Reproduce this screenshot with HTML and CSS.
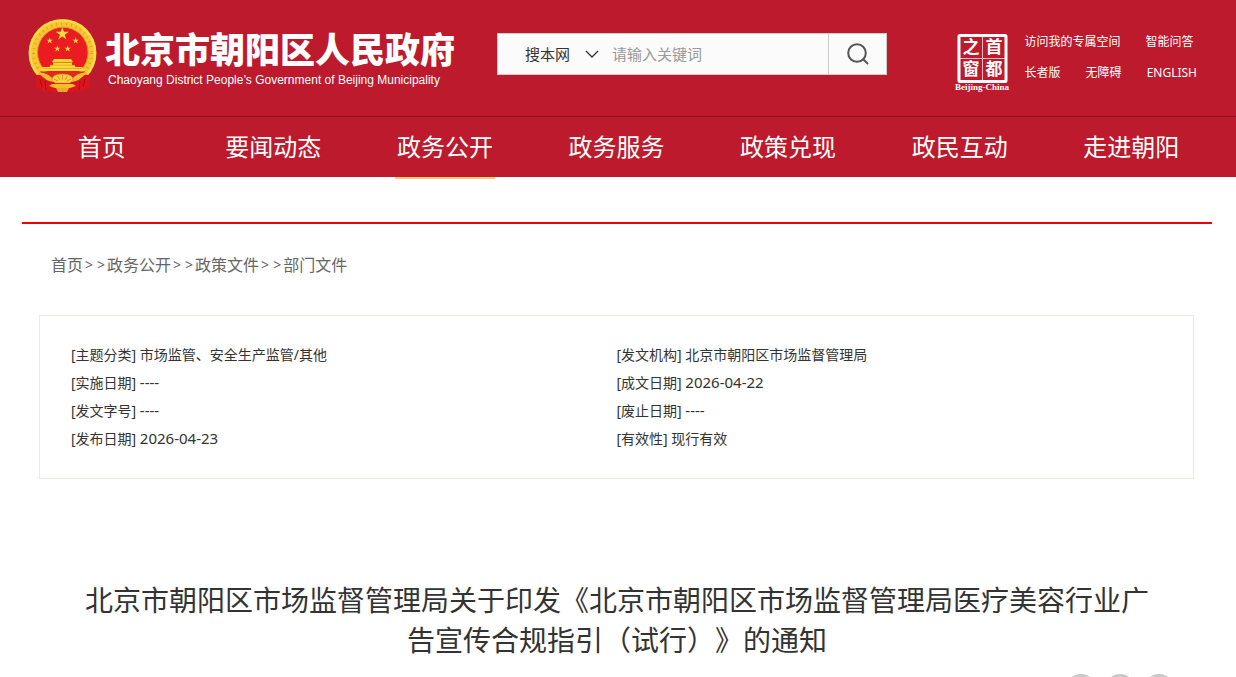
FILE: index.html
```
<!DOCTYPE html>
<html lang="zh-CN">
<head>
  <meta charset="UTF-8" />
  <meta name="viewport" content="width=device-width, initial-scale=1" />
  <title>北京市朝阳区人民政府</title>
  <link rel="stylesheet" href="styles.css">
</head>
<body>
  <header class="header">
    <div class="top">
      <a class="logo" href="#">
        <svg class="emblem" viewBox="0 0 70 76" aria-hidden="true">
          <defs>
            <path id="star" d="M0-10 2.3-3.1H9.5L3.6 1.2 5.9 8.1 0 3.8-5.9 8.1-3.6 1.2-9.5-3.1H-2.3Z" />
          </defs>
          <circle cx="34.5" cy="35" r="34" fill="#f6c733" />
          <circle cx="34.5" cy="35" r="29" fill="none" stroke="#e0a520" stroke-width="3" stroke-dasharray="1 4" />
          <circle cx="34.5" cy="35" r="32.5" fill="none" stroke="#fbdc4d" stroke-width="2" />
          <circle cx="34.8" cy="34.5" r="25.3" fill="#ea1c22" stroke="#d99a1c" stroke-width="1" />
          <g fill="#fbd938">
            <use href="#star" transform="translate(34.3 16) scale(.69)" />
            <use href="#star" transform="translate(21.7 22.7) scale(.34)" />
            <use href="#star" transform="translate(47.7 22.7) scale(.34)" />
            <use href="#star" transform="translate(29.3 30.7) scale(.34)" />
            <use href="#star" transform="translate(39.7 30.7) scale(.34)" />
            <path d="M26 41h17l2 3H24zM25 44.500h19V47H25zM22.500 47h24l1.500 3H21zM15 49h39l3 4H12z" />
          </g>
          <path d="M24 44.300h21M22 47.200h25M15 50.500h39" stroke="#c98a1a" stroke-width=".5" />
          <path d="M9 57q-2 5-.5 13l5 .5 1.500 3 6-1 4 1.500h20l4-1.500 6 1 1.500-3 5-.5q1.500-8-.5-13l-8-1-19 6-17-6z" fill="#dc141d" />
          <path d="M12 61l2 8M17 63l1 9M57 61l-2 8M52 63l-1 9" stroke="#a01019" stroke-width="1" />
          <path d="M12 53.500h45l-3 3q-5 5-11 8H26q-7-3-11-8z" fill="#e3261f" />
          <path d="M10 55q7-1 13 4l5 5q-8 0-12-4zM59 55q-7-1-13 4l-5 5q8 0 12-4z" fill="#f3bd2c" />
          <path d="M24 62q0-6 10.500-6T45 62l-3 3H27z" fill="#f8d044" stroke="#d39a20" stroke-width=".6" />
          <path d="M34.500 56.500v5M29.500 58l2.500 4M39.500 58l-2.500 4M26 61l4 2M43 61l-4 2" stroke="#c98a1a" stroke-width=".8" />
          <path d="M24 66h21l3 2-6 2H27l-6-2z" fill="#f3bd2c" />
          <path d="M28 70h13l-2 4h-9z" fill="#e9a92a" />
        </svg>
        <span class="logo-text">
          <strong>北京市朝阳区人民政府</strong>
          <span class="logo-en">Chaoyang District People’s Government of Beijing Municipality</span>
        </span>
      </a>

      <form class="search">
        <select class="scope" aria-label="搜索范围">
          <option>搜本网</option>
        </select>
        <svg class="chevron" viewBox="0 0 14 8" aria-hidden="true"><path d="M1 1l6 6 6-6" /></svg>
        <input type="text" class="query" placeholder="请输入关键词" aria-label="请输入关键词" autocomplete="off" />
        <button type="submit" class="search-btn" aria-label="搜索">
          <svg viewBox="0 0 24 24"><circle cx="11" cy="11" r="8.800" /><path d="M17.500 17.500l4.500 4.500" /></svg>
        </button>
      </form>

      <div class="side">
        <a class="capital" href="#" aria-label="首都之窗">
          <svg viewBox="0 0 56 60">
            <rect x="4" y="3.500" width="47" height="46" rx="1" fill="none" stroke="#fff" stroke-width="3" />
            <path d="M27.500 5v43M5 26.500h45" stroke="#fff" stroke-width="1" opacity=".7" />
            <g class="seal">
              <text x="16" y="21">之</text>
              <text x="39" y="21">首</text>
              <text x="16" y="43">窗</text>
              <text x="39" y="43">都</text>
            </g>
            <text class="seal-en" x="27" y="58">Beijing-China</text>
          </svg>
        </a>
        <div class="links">
          <div><a href="#">访问我的专属空间</a><a href="#">智能问答</a></div>
          <div><a href="#">长者版</a><a href="#">无障碍</a><a href="#">ENGLISH</a></div>
        </div>
      </div>
    </div>

    <nav class="nav">
      <a href="#">首页</a>
      <a href="#">要闻动态</a>
      <a href="#" class="on">政务公开</a>
      <a href="#">政务服务</a>
      <a href="#">政策兑现</a>
      <a href="#">政民互动</a>
      <a href="#">走进朝阳</a>
    </nav>
  </header>

  <main class="main">
    <div class="crumbs">
      <a href="#">首页</a><span class="sep"><i>&gt;</i><i>&gt;</i></span><a href="#">政务公开</a><span class="sep"><i>&gt;</i><i>&gt;</i></span><a href="#">政策文件</a><span class="sep"><i>&gt;</i><i>&gt;</i></span><a href="#">部门文件</a>
    </div>

    <div class="info">
      <ul>
        <li>[主题分类] 市场监管、安全生产监管/其他</li>
        <li>[实施日期] <span class="num">----</span></li>
        <li>[发文字号] <span class="num">----</span></li>
        <li>[发布日期] <span class="num">2026-04-23</span></li>
      </ul>
      <ul>
        <li>[发文机构] 北京市朝阳区市场监督管理局</li>
        <li>[成文日期] <span class="num">2026-04-22</span></li>
        <li>[废止日期] <span class="num">----</span></li>
        <li>[有效性] 现行有效</li>
      </ul>
    </div>

    <h1>北京市朝阳区市场监督管理局关于印发《北京市朝阳区市场监督管理局医疗美容行业广告宣传合规指引（试行）》的通知</h1>

    <div class="share">
      <a href="#" aria-label="微信"></a>
      <a href="#" aria-label="微博"></a>
      <a href="#" aria-label="打印"></a>
    </div>
  </main>
</body>
</html>
```

FILE: styles.css
```
* {
  box-sizing: border-box;
}
body {
  margin: 0;
  font-family: "Noto Sans", "Noto Sans CJK SC", sans-serif;
  font-size: 14px;
  color: #333;
  background: #fff;
}
a {
  color: inherit;
  text-decoration: none;
}
ul {
  list-style: none;
  margin: 0;
  padding: 0;
}

.header {
  background: #bd1a2d;
  color: #fff;
}
.top {
  display: flex;
  align-items: flex-start;
  height: 117px;
  padding: 18px 39px 0 28px;
  border-bottom: 1px solid #8f0f1e;
}

/* logo */
.logo {
  display: flex;
  gap: 7px;
  width: 469px;
}
.emblem {
  width: 70px;
  height: 76px;
}
.logo-text {
  display: flex;
  flex-direction: column;
  padding-top: 10px;
  white-space: nowrap;
}
.logo-text strong {
  font-family: "Noto Sans CJK SC", sans-serif;
  font-size: 35px;
  font-weight: 900;
  line-height: 40px;
}
.logo-en {
  font-family: "Liberation Sans", Arial, sans-serif;
  font-size: 12px;
  line-height: 24px;
  padding-left: 3px;
}

/* search */
.search {
  position: relative;
  display: flex;
  width: 390px;
  height: 42px;
  margin-top: 15px;
  background: #fbfbfb;
  border: 1px solid #ccc;
}
.scope,
.query {
  border: 0;
  outline: 0;
  padding: 0;
  background: none;
  font: inherit;
  font-size: 15px;
  color: #333;
}
.scope {
  appearance: none;
  width: 114px;
  padding-left: 27px;
}
.query {
  flex: 1;
  min-width: 0;
}
.query::placeholder {
  color: #999;
}
.chevron {
  position: absolute;
  left: 87px;
  top: 16px;
  width: 14px;
  height: 8px;
  fill: none;
  stroke: #333;
  stroke-width: 1.3;
  pointer-events: none;
}
.search-btn {
  width: 58px;
  padding: 0;
  border: 0;
  border-left: 1px solid #ccc;
  background: none;
  cursor: pointer;
}
.search-btn svg {
  display: block;
  width: 24px;
  height: 24px;
  margin: 0 auto;
  fill: none;
  stroke: #555;
  stroke-width: 2;
}

.side {
  display: flex;
  gap: 14px;
  margin-left: auto;
  padding-top: 14px;
}
.capital svg {
  display: block;
  width: 56px;
  height: 60px;
}
.seal {
  font-family: "Noto Sans CJK SC", sans-serif;
  font-size: 17px;
  font-weight: 700;
  fill: #fff;
  text-anchor: middle;
}
.seal-en {
  font-family: "Liberation Serif", serif;
  font-size: 9px;
  font-weight: bold;
  fill: #fff;
  text-anchor: middle;
}
.links {
  font-size: 12px;
  line-height: 31px;
  margin-top: -6px;
}
.links div {
  display: flex;
  gap: 25px;
}

/* main nav */
.nav {
  display: flex;
  height: 60px;
  padding: 0 19px 0 16px;
}
.nav a {
  flex: 1;
  display: flex;
  flex-direction: column;
  align-items: center;
  font-size: 24px;
  line-height: 60px;
}
.nav .on::after {
  content: "";
  width: 100px;
  height: 2px;
  flex: none;
  background: #f5cd7a;
}

.main {
  margin: 45px 24px 0 22px;
  border-top: 2px solid #f00000;
}
.crumbs {
  display: flex;
  margin: 29px 29px 0;
  font-size: 16px;
  line-height: 24px;
  color: #666;
}
.sep {
  display: flex;
  gap: 4px;
  padding: 0 2px;
  font-size: 14px;
}
.sep i {
  font-style: normal;
}

.info {
  display: grid;
  grid-template-columns: 1fr 1fr;
  margin: 38px 18px 0 17px;
  padding: 25px 31px;
  border: 1px solid #ebebe4;
  line-height: 28px;
}
.num {
  font-size: 15px;
  line-height: 20px;
}

h1 {
  margin: 101px 60px 0;
  font-size: 28px;
  font-weight: normal;
  line-height: 40px;
  text-align: center;
  text-spacing-trim: space-all;
}

.share {
  display: flex;
  justify-content: flex-end;
  gap: 9px;
  margin: 14px 38px 20px;
}
.share a {
  width: 30px;
  height: 30px;
  border-radius: 50%;
  background: #c8c8c8;
}
```
